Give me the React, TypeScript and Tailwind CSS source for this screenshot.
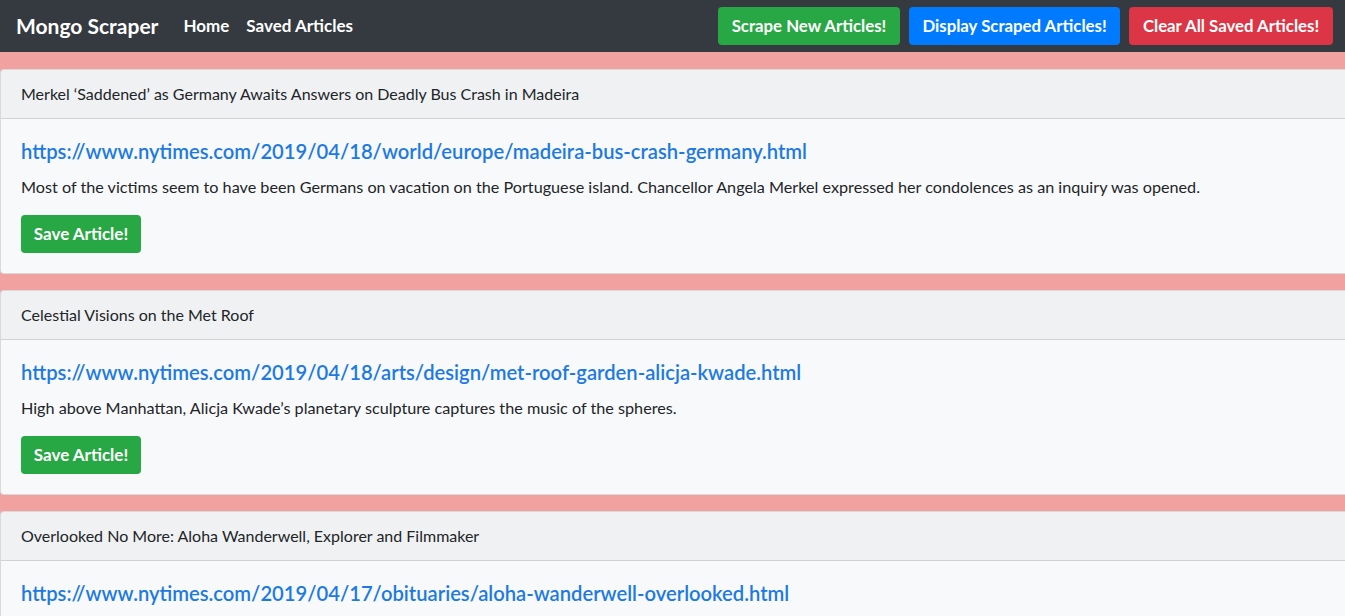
const articles = [
  {
    title: "Merkel ‘Saddened’ as Germany Awaits Answers on Deadly Bus Crash in Madeira",
    link: "https://www.nytimes.com/2019/04/18/world/europe/madeira-bus-crash-germany.html",
    summary:
      "Most of the victims seem to have been Germans on vacation on the Portuguese island. Chancellor Angela Merkel expressed her condolences as an inquiry was opened.",
  },
  {
    title: "Celestial Visions on the Met Roof",
    link: "https://www.nytimes.com/2019/04/18/arts/design/met-roof-garden-alicja-kwade.html",
    summary: "High above Manhattan, Alicja Kwade’s planetary sculpture captures the music of the spheres.",
  },
  {
    title: "Overlooked No More: Aloha Wanderwell, Explorer and Filmmaker",
    link: "https://www.nytimes.com/2019/04/17/obituaries/aloha-wanderwell-overlooked.html",
    summary: "She drove around the world in a Model T and documented her travels on film.",
  },
]

function Navbar() {
  return (
    <nav className="h-[52px] bg-[#343a40] flex items-center pl-4 pr-3">
      <span className="text-white text-[21px] font-bold mr-[25px]">Mongo Scraper</span>
      <a className="text-white text-[17px] font-bold mr-[17px]">Home</a>
      <a className="text-white text-[17px] font-bold">Saved Articles</a>
      <div className="ml-auto flex items-center gap-[9px]">
        <button className="h-[38px] w-[182px] rounded bg-[#28a745] text-white text-[16.8px] font-bold">
          Scrape New Articles!
        </button>
        <button className="h-[38px] w-[211px] rounded bg-[#007bff] text-white text-[16.8px] font-bold">
          Display Scraped Articles!
        </button>
        <button className="h-[38px] w-[204px] rounded bg-[#dc3545] text-white text-[16.8px] font-bold">
          Clear All Saved Articles!
        </button>
      </div>
    </nav>
  )
}

function ArticleCard({ title, link, summary }: { title: string; link: string; summary: string }) {
  return (
    <div className="-mr-3 mt-4 first:mt-[17px] rounded border border-[rgba(0,0,0,0.125)] bg-[#f8f9fa]">
      <div className="h-[49px] px-5 flex items-center border-b border-[rgba(0,0,0,0.125)] bg-[rgba(0,0,0,0.03)] text-[16px] text-[#212529]">
        {title}
      </div>
      <div className="p-5">
        <a className="block text-[20.2px] leading-6 font-semibold text-[#1d7ae2] mb-3">{link}</a>
        <p className="text-[16.2px] leading-6 text-[#212529] mb-4">{summary}</p>
        <button className="h-[38px] w-[120px] rounded bg-[#28a745] text-white text-[17px] font-bold">
          Save Article!
        </button>
      </div>
    </div>
  )
}

export default function App() {
  return (
    <div className="h-[616px] overflow-hidden bg-[#f2a1a1] font-['Lato',sans-serif]">
      <Navbar />
      <div>
        {articles.map((a) => (
          <ArticleCard key={a.link} {...a} />
        ))}
      </div>
    </div>
  )
}
